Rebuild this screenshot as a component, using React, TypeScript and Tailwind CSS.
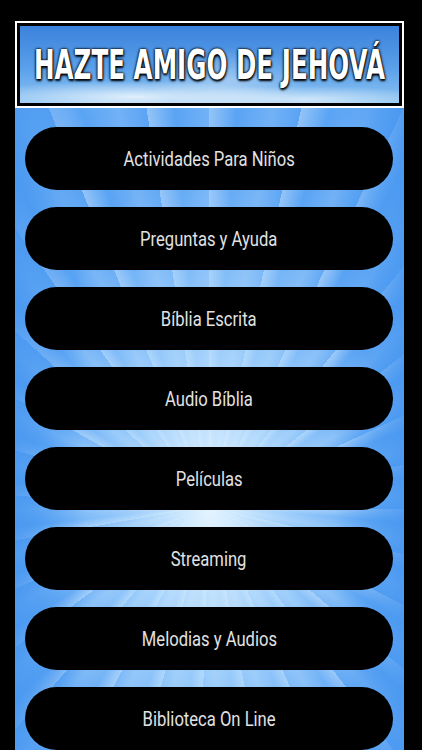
import React from 'react';

const items = [
  'Actividades Para Niños',
  'Preguntas y Ayuda',
  'Bíblia Escrita',
  'Audio Bíblia',
  'Películas',
  'Streaming',
  'Melodias y Audios',
  'Biblioteca On Line',
];

export default function App() {
  return (
    <div className="w-[422px] h-[750px] bg-black overflow-hidden flex flex-col px-[15px] pt-[21px]">
      {/* Header banner */}
      <div className="h-[87px] border-2 border-white bg-black p-[3px] shrink-0 mr-[3px]">
        <div className="relative h-full overflow-hidden bg-[linear-gradient(to_bottom,#3b82dc_0%,#5aa0ea_55%,#8cc4f2_100%)] flex items-center justify-center">
          <div className="absolute inset-0 bg-[radial-gradient(ellipse_60%_30%_at_30%_92%,rgba(255,255,255,0.75),transparent_70%),radial-gradient(ellipse_50%_25%_at_75%_95%,rgba(255,255,255,0.6),transparent_70%),radial-gradient(ellipse_30%_60%_at_55%_70%,rgba(255,255,255,0.35),transparent_70%)]" />
          <h1 className="relative text-white font-bold text-[41px] leading-none whitespace-nowrap [font-family:'DejaVu_Sans',sans-serif] [text-shadow:0_0_3px_#000,0_0_3px_#000,1px_2px_3px_#000] scale-x-[0.6] mt-[2px]">
            HAZTE AMIGO DE JEHOVÁ
          </h1>
        </div>
      </div>

      {/* Menu panel */}
      <div className="flex-1 mr-[3px] relative overflow-hidden bg-[#5aa4f4]">
        <div className="absolute inset-0 bg-[repeating-conic-gradient(from_0deg_at_50%_62%,rgba(255,255,255,0.35)_0deg,rgba(255,255,255,0)_4deg,rgba(255,255,255,0.15)_9deg,rgba(255,255,255,0)_13deg)]" />
        <div className="absolute inset-0 bg-[radial-gradient(ellipse_45%_55%_at_50%_62%,rgba(235,248,255,0.95),rgba(200,232,255,0.6)_45%,rgba(90,164,244,0)_100%)]" />
        <div className="absolute inset-0 bg-[linear-gradient(to_right,rgba(70,150,240,0.8),rgba(70,150,240,0)_18%,rgba(70,150,240,0)_82%,rgba(70,150,240,0.8))]" />
        <div className="relative flex flex-col gap-[17px] pt-[19px] pl-[10px] pr-[11px]">
          {items.map((label) => (
            <button
              key={label}
              className="h-[63px] shrink-0 rounded-full bg-black text-[#e2e2e2] flex items-center justify-center"
            >
              <span className="inline-block text-[20px] whitespace-nowrap [font-family:Roboto,'Liberation_Sans',sans-serif] scale-x-[0.83]">
                {label}
              </span>
            </button>
          ))}
        </div>
      </div>
    </div>
  );
}
